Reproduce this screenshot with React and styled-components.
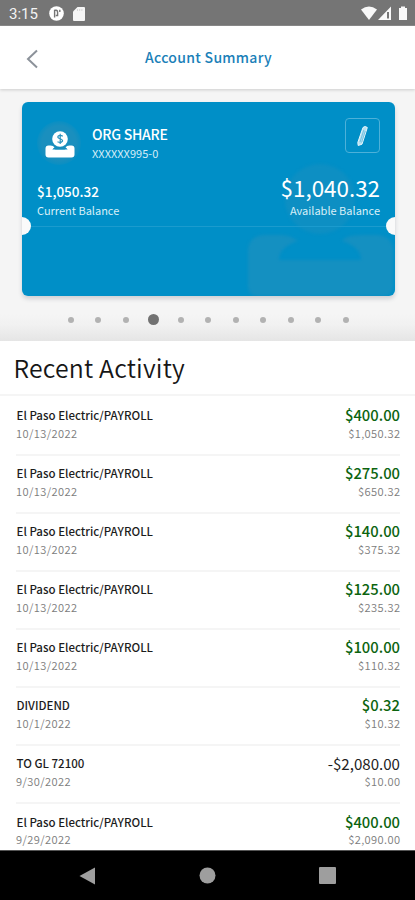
import React from "react";
import styled, { createGlobalStyle, css } from "styled-components";

const colors = {
    blue: "#008fc7",
    link: "#1a80b8",
    green: "#0c640f",
    muted: "#7c7c7c",
    line: "#f5f5f5",
};

const GlobalStyle = createGlobalStyle`
    * {
        box-sizing: border-box;
    }
    body {
        margin: 0;
        background: #ffffff;
        font-family: "Noto Sans CJK JP", "Noto Sans", sans-serif;
    }
`;

const Screen = styled.div`
    width: 415px;
    height: 900px;
    display: flex;
    flex-direction: column;
    overflow: hidden;
    background: #ffffff;
`;

const StatusBar = styled.header`
    height: 26px;
    flex: none;
    display: flex;
    align-items: center;
    padding: 2px 7px 0 9px;
    background: #757575;
    border-bottom: 1px solid #8b8b8b;
    color: #f3f3f3;
`;

const Clock = styled.span`
    width: 40px;
    font-family: Roboto, sans-serif;
    font-size: 15px;
    line-height: 20px;
`;

const StatusIcons = styled.div`
    display: flex;
    align-items: center;
    gap: ${(props) => props.$gap}px;
    margin-left: ${(props) => (props.$end ? "auto" : "0")};

    svg {
        display: block;
    }
`;

const NavBar = styled.nav`
    height: 63px;
    flex: none;
    display: grid;
    grid-template-columns: 64px 1fr 64px;
    align-items: center;
    background: #ffffff;
    box-shadow: 0 1px 3px rgba(0, 0, 0, 0.17);
    z-index: 1;
`;

const BackButton = styled.button`
    height: 40px;
    padding: 2px 0 0 24px;
    border: 0;
    background: none;
    text-align: left;

    svg {
        display: block;
    }
`;

const NavTitle = styled.h1`
    margin: 0;
    padding: 0 0 2px 2px;
    color: ${colors.link};
    font-size: 14px;
    font-weight: 500;
    line-height: 20px;
    letter-spacing: 0.3px;
    text-align: center;
`;

const Carousel = styled.section`
    height: 252px;
    flex: none;
    padding: 13px 20px 0 22px;
    background: linear-gradient(#f5f5f5 0 225px, #f1f1f1 236px, #e5e5e5 252px);
`;

const Card = styled.article`
    position: relative;
    height: 194px;
    overflow: hidden;
    border-radius: 6px;
    background: ${colors.blue};
    color: #ffffff;
`;

const CardShadow = styled.div`
    border-radius: 6px;
    box-shadow: 0 3px 4px rgba(60, 70, 90, 0.2);
`;

const Watermark = styled.svg`
    position: absolute;
    right: 2px;
    bottom: 0;
    filter: blur(1.5px);
`;

const Notch = styled.span`
    position: absolute;
    top: 115px;
    ${(props) => props.$side}: -9px;
    width: 18px;
    height: 18px;
    border-radius: 50%;
    background: #fafafa;
`;

const CardTop = styled.div`
    position: relative;
    height: 125px;
    padding: 16px 15px 0 15px;
    border-bottom: 1px solid #1b9bce;
`;

const CardHeader = styled.div`
    height: 55px;
    display: flex;
    align-items: flex-start;
`;

const AccountIcon = styled.div`
    width: 44px;
    height: 44px;
    margin: 3px 11px 0 0;
    border-radius: 50%;
    background: radial-gradient(#1a8fbe 55%, #078fc4 72%);
`;

const AccountName = styled.h2`
    margin: 6px 0 0;
    font-size: 14px;
    font-weight: 500;
    line-height: 20px;
    letter-spacing: -0.25px;
`;

const AccountNumber = styled.p`
    margin: 0;
    color: #d5edf7;
    font-size: 11px;
    line-height: 18px;
    letter-spacing: 0.02px;
`;

const EditButton = styled.button`
    width: 35px;
    height: 35px;
    margin-left: auto;
    padding: 0;
    display: grid;
    place-items: center;
    border: 1px solid #4db1d9;
    border-radius: 4px;
    background: none;
`;

const Balances = styled.div`
    display: flex;
    justify-content: space-between;
    align-items: flex-end;
`;

const Balance = styled.div`
    text-align: ${(props) => (props.$large ? "right" : "left")};
`;

const BalanceAmount = styled.div`
    font-size: 13.5px;
    line-height: 21px;
    font-weight: 500;
    ${(props) =>
        props.$large &&
        css`
            font-size: 22.4px;
            font-weight: 400;
            line-height: 29px;
        `}
`;

const BalanceLabel = styled.div`
    color: #d9eff8;
    font-size: 11px;
    line-height: 16px;
`;

const Dots = styled.div`
    display: flex;
    justify-content: space-between;
    align-items: center;
    height: 11px;
    margin: 18px 46px 0 45.5px;
`;

const Dot = styled.span`
    width: 6px;
    height: 6px;
    border-radius: 50%;
    background: #b2b2b2;
    ${(props) =>
        props.$active &&
        css`
            width: 11px;
            height: 11px;
            margin: 0 -2.5px;
            background: #727272;
        `}
`;

const Activity = styled.main`
    flex: 1;
    min-height: 0;
    overflow: hidden;
    background: #ffffff;
`;

const ActivityTitle = styled.h2`
    height: 54.5px;
    margin: 0;
    padding: 7px 13.5px 0;
    border-bottom: 2px solid ${colors.line};
    color: #161616;
    font-size: 24.8px;
    font-weight: 350;
    line-height: 38px;
    letter-spacing: 0.2px;
`;

const TransactionList = styled.ul`
    margin: 0;
    padding: 2px 15px 0 16px;
    list-style: none;
`;

const Transaction = styled.li`
    height: 58.08px;
    display: grid;
    grid-template-columns: 1fr auto;
    grid-template-rows: 19.5px 17px;
    align-content: start;
    padding-top: 7.5px;
    border-bottom: 2px solid ${colors.line};
`;

const Payee = styled.span`
    padding-left: 0.5px;
    color: #1c1c1c;
    font-size: 11.5px;
    font-weight: 500;
    line-height: 20px;
`;

const Amount = styled.span`
    color: ${(props) => (props.$credit ? colors.green : "#222222")};
    font-size: ${(props) => (props.$credit ? 14.8 : 15.1)}px;
    font-weight: ${(props) => (props.$credit ? 500 : 400)};
    line-height: 20px;
    text-align: right;
`;

const Detail = styled.span`
    color: ${colors.muted};
    font-size: 11.1px;
    font-weight: 350;
    line-height: 17px;
    letter-spacing: 0.4px;
    margin-right: ${(props) => (props.$end ? "-0.4px" : "0")};
    text-align: ${(props) => (props.$end ? "right" : "left")};
`;

const SystemNav = styled.footer`
    height: 50px;
    flex: none;
    display: flex;
    justify-content: center;
    align-items: center;
    gap: 103px;
    border-top: 1px solid #555555;
    background: #000000;
`;

const transactions = [
    { payee: "El Paso Electric/PAYROLL", date: "10/13/2022", amount: "$400.00", balance: "$1,050.32" },
    { payee: "El Paso Electric/PAYROLL", date: "10/13/2022", amount: "$275.00", balance: "$650.32" },
    { payee: "El Paso Electric/PAYROLL", date: "10/13/2022", amount: "$140.00", balance: "$375.32" },
    { payee: "El Paso Electric/PAYROLL", date: "10/13/2022", amount: "$125.00", balance: "$235.32" },
    { payee: "El Paso Electric/PAYROLL", date: "10/13/2022", amount: "$100.00", balance: "$110.32" },
    { payee: "DIVIDEND", date: "10/1/2022", amount: "$0.32", balance: "$10.32" },
    { payee: "TO GL 72100", date: "9/30/2022", amount: "-$2,080.00", balance: "$10.00" },
    { payee: "El Paso Electric/PAYROLL", date: "9/29/2022", amount: "$400.00", balance: "$2,090.00" },
];

const DOT_COUNT = 11;
const ACTIVE_DOT = 3;

// Open hand holding a coin
const handPath =
    "M3 14 Q0 14 0 17 V23 Q0 26 3 26 H26 Q29 26 29 23 V17 Q29 14 26 14 H24 Q21 14 20 16 Q22 17 22 18.5 H7 Q7 17 9 16 Q8 14 5 14 Z";

const App = () => {
    return (
        <Screen>
            <GlobalStyle />
            <StatusBar>
                <Clock>3:15</Clock>
                <StatusIcons $gap={9}>
                    <svg width="15" height="15" viewBox="0 0 15 15">
                        <circle cx="7.5" cy="7.5" r="7.3" fill="#fff" />
                        <path d="M5.6 3.8V11.5M5.6 4.2H7.2Q8.6 4.2 8.6 6.5V9.5H6.8M10.8 3.8V6" fill="none" stroke="#757575" strokeWidth="1.4" />
                    </svg>
                    <svg width="12" height="14" viewBox="0 0 12 14">
                        <path d="M4.5 0H11Q12 0 12 1V13Q12 14 11 14H1Q0 14 0 13V4.5Z" fill="#f5f5f5" />
                        <path d="M4.5 2V4M6.7 2V4M8.9 2V4" stroke="#d5d5d5" strokeWidth="1" />
                    </svg>
                </StatusIcons>
                <StatusIcons $gap={0} $end>
                    <svg width="47" height="15" viewBox="0 0 47 15" fill="#f8f8f8">
                        <path d="M0 3.5Q8 -2.5 16 3.5L8 14Z" />
                        <path fillRule="evenodd" d="M30 .5V14H17ZM28 6H26V12.5H28Z" />
                        <path d="M40 .5H44V2H46V14H38V2H40Z" />
                    </svg>
                </StatusIcons>
            </StatusBar>
            <NavBar>
                <BackButton aria-label="Back">
                    <svg width="15" height="20" viewBox="0 0 15 20">
                        <path d="M13 1.5L4 10L13 18.5" fill="none" stroke="#8c929a" strokeWidth="2" />
                    </svg>
                </BackButton>
                <NavTitle>Account Summary</NavTitle>
            </NavBar>
            <Carousel>
                <CardShadow>
                    <Card>
                        <Watermark width="145" height="132" viewBox="0 0 145 132" fill="#1990bf">
                            <circle cx="72" cy="35" r="35" opacity="0.5" />
                            <path
                                d="M18 71Q0 71 0 88V122Q0 132 10 132H135Q145 132 145 122V88Q145 71 127 71H115Q98 71 94 77Q113 83 113 96H31Q31 83 50 77Q42 71 33 71Z"
                                opacity="0.8"
                            />
                        </Watermark>
                        <CardTop>
                            <CardHeader>
                                <AccountIcon>
                                    <svg width="44" height="44" viewBox="0 0 44 44">
                                        <g transform="translate(8.5 10.5)" fill="#fff">
                                            <path d={handPath} />
                                            <path d="M7 18H22V20H7Z" />
                                        </g>
                                        <circle cx="23" cy="18" r="7.8" fill="#fff" />
                                        <path
                                            d="M25.8 15.2Q23 13.4 21 15.2C19.5 18 26.5 17.5 25.5 20.2Q24 22.4 20.5 20.8M23.2 12.8V23"
                                            fill="none"
                                            stroke="#2b93bd"
                                            strokeWidth="1.2"
                                        />
                                        <path d="M16 27.2Q23 24.6 30 27.2L27.5 28.6H18.5Z" fill="#168dbd" />
                                    </svg>
                                </AccountIcon>
                                <div>
                                    <AccountName>ORG SHARE</AccountName>
                                    <AccountNumber>XXXXXX995-0</AccountNumber>
                                </div>
                                <EditButton aria-label="Edit">
                                    <svg width="13" height="22" viewBox="0 0 13 22">
                                        <path
                                            d="M7 2.5Q9 .5 11.3 2.5L6 19.2L2.2 20.5L1.8 17.5Z"
                                            fill="#b5e0f1"
                                            stroke="#e8f6fb"
                                            strokeWidth="1"
                                        />
                                        <path d="M7.8 5L4 17M9.3 6L5.6 17.5" stroke="#58b7dc" strokeWidth="0.7" />
                                    </svg>
                                </EditButton>
                            </CardHeader>
                            <Balances>
                                <Balance>
                                    <BalanceAmount>$1,050.32</BalanceAmount>
                                    <BalanceLabel>Current Balance</BalanceLabel>
                                </Balance>
                                <Balance $large>
                                    <BalanceAmount $large>$1,040.32</BalanceAmount>
                                    <BalanceLabel>Available Balance</BalanceLabel>
                                </Balance>
                            </Balances>
                        </CardTop>
                        <Notch $side="left" />
                        <Notch $side="right" />
                    </Card>
                </CardShadow>
                <Dots>
                    {Array.from({ length: DOT_COUNT }, (_, index) => (
                        <Dot key={index} $active={index === ACTIVE_DOT} />
                    ))}
                </Dots>
            </Carousel>
            <Activity>
                <ActivityTitle>Recent Activity</ActivityTitle>
                <TransactionList>
                    {transactions.map((item, index) => (
                        <Transaction key={index}>
                            <Payee>{item.payee}</Payee>
                            <Amount $credit={!item.amount.startsWith("-")}>{item.amount}</Amount>
                            <Detail>{item.date}</Detail>
                            <Detail $end>{item.balance}</Detail>
                        </Transaction>
                    ))}
                </TransactionList>
            </Activity>
            <SystemNav>
                <svg width="17" height="18" viewBox="0 0 17 18">
                    <path d="M16 .5V17.5L.5 9Z" fill="#9e9e9e" />
                </svg>
                <svg width="17" height="17" viewBox="0 0 17 17">
                    <circle cx="8.5" cy="8.5" r="8" fill="#9e9e9e" />
                </svg>
                <svg width="17" height="17" viewBox="0 0 17 17">
                    <rect width="17" height="17" rx="1" fill="#9e9e9e" />
                </svg>
            </SystemNav>
        </Screen>
    );
};

export default App;
